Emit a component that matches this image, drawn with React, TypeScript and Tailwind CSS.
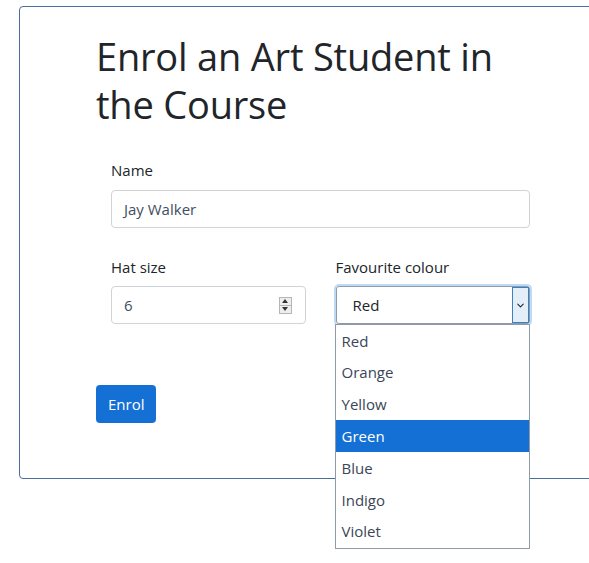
import { ChevronDown } from "lucide-react"

const colours = ["Red", "Orange", "Yellow", "Green", "Blue", "Indigo", "Violet"]

export default function App() {
  return (
    <div className="w-[589px] h-[563px] overflow-hidden bg-white font-['Open_Sans',sans-serif] text-[#212529]">
      <div className="ml-[19px] mt-[6px] w-[620px] h-[473px] rounded-[4px] border border-[#4a6d9f] pl-[76px] pt-[25px]">
        <div className="w-[449px]">
          <h1 className="text-[38px] leading-[48px] font-normal tracking-[-0.2px]">
            Enrol an Art Student in the Course
          </h1>

          <div className="mt-[30px] px-[15px]">
            <label className="block text-[15px] leading-[24px]">Name</label>
            <div className="mt-[8px] h-[38px] rounded-[4px] border border-[#ced4da] px-[12px] flex items-center text-[15px] text-[#3f4e63]">
              Jay Walker
            </div>
          </div>

          <div className="mt-[27px] grid grid-cols-2 gap-[30px] px-[15px]">
            <div>
              <label className="block text-[15px] leading-[24px]">Hat size</label>
              <div className="mt-[7px] h-[38px] rounded-[4px] border border-[#ced4da] pl-[12px] pr-[13px] flex items-center justify-between text-[15px] text-[#3f4e63]">
                <span>6</span>
                <span className="flex flex-col w-[13px] h-[17px] border border-[#b5b5b5] bg-[#eeeeee]">
                  <span className="flex-1 flex items-center justify-center border-b border-[#b5b5b5]">
                    <span className="w-0 h-0 border-x-[3px] border-x-transparent border-b-[4px] border-b-[#333]" />
                  </span>
                  <span className="flex-1 flex items-center justify-center">
                    <span className="w-0 h-0 border-x-[3px] border-x-transparent border-t-[4px] border-t-[#333]" />
                  </span>
                </span>
              </div>
            </div>

            <div className="relative">
              <label className="block text-[15px] leading-[24px]">Favourite colour</label>
              <div className="mt-[7px] h-[38px] rounded-[3px] border border-[#8f9aa8] ring-2 ring-[#bcdcf5] flex items-center text-[15px] text-[#212529]">
                <span className="flex-1 pl-[16px]">Red</span>
                <span className="h-full w-[17px] flex items-center justify-center border border-[#3b7fc4] bg-[#e3eef9]">
                  <ChevronDown size={11} strokeWidth={2.25} className="text-[#222]" />
                </span>
              </div>
              <ul className="absolute left-[-1px] top-[69px] w-[195px] border border-[#8f9aa8] bg-white text-[15px] text-[#3a4657] z-10">
                {colours.map((c) => (
                  <li
                    key={c}
                    className={
                      c === "Green"
                        ? "h-[31.8px] flex items-center pl-[6px] bg-[#1470d4] text-white"
                        : "h-[31.8px] flex items-center pl-[6px]"
                    }
                  >
                    {c}
                  </li>
                ))}
              </ul>
            </div>
          </div>

          <button className="mt-[61px] h-[38px] px-[12px] rounded-[4px] bg-[#1470d4] text-white text-[15px]">
            Enrol
          </button>
        </div>
      </div>
    </div>
  )
}
